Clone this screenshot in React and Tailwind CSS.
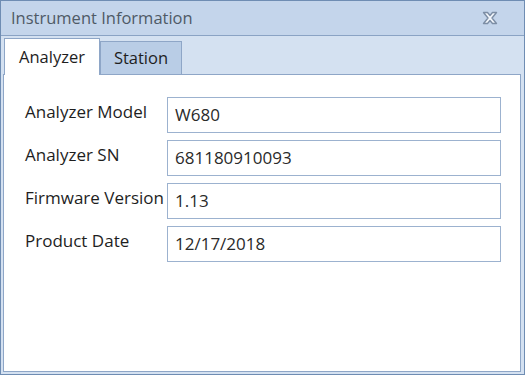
import React from 'react';

const rows = [
  { label: 'Analyzer Model', value: 'W680' },
  { label: 'Analyzer SN', value: '681180910093' },
  { label: 'Firmware Version', value: '1.13' },
  { label: 'Product Date', value: '12/17/2018' },
];

function CloseIcon() {
  return (
    <svg width="16" height="14" viewBox="0 0 16 14">
      <path
        d="M1.5 1.5h4l2.5 3 2.5-3h4l-4.5 5.5 4.5 5.5h-4l-2.5-3-2.5 3h-4l4.5-5.5z"
        fill="#f2f6fb"
        stroke="#7d8ea5"
        strokeWidth="1.4"
        strokeLinejoin="round"
      />
    </svg>
  );
}

export default function App() {
  return (
    <div
      className="w-[525px] h-[375px] flex flex-col bg-[#c4d5eb] border border-[#6f8db3] text-[#1e1e1e]"
      style={{ fontFamily: '"Open Sans", "Noto Sans", sans-serif' }}
    >
      {/* Title bar */}
      <div className="h-[35px] shrink-0 flex items-center justify-between pl-[10px] pr-[26px] border-b border-[#8aa3c4]">
        <span className="text-[16.5px] text-[#4f5a66] pt-[1px]">Instrument Information</span>
        <CloseIcon />
      </div>

      {/* Body */}
      <div className="flex-1 flex flex-col bg-[#d4e1f1] pl-[2px] pr-[3px] pb-[2px]">
        {/* Tabs */}
        <div className="h-[38px] shrink-0 flex items-end pl-[1px]">
          <div className="relative z-10 -mb-px h-[37px] w-[96px] flex items-center justify-center bg-white border border-b-0 border-[#8ea6c7] text-[16.5px]">
            Analyzer
          </div>
          <div className="h-[33px] w-[82px] flex items-center justify-center bg-[#b9cde6] border border-b-0 border-[#8ea6c7] text-[16.5px]">
            Station
          </div>
        </div>

        {/* Content */}
        <div className="flex-1 bg-white border border-[#8ea6c7] pt-[22px] pl-[21px] pr-[19px] flex flex-col gap-[7px]">
          {rows.map((r) => (
            <div key={r.label} className="flex h-[36px]">
              <div className="w-[142px] shrink-0 pt-[4px] text-[17px] leading-[22px] whitespace-nowrap">{r.label}</div>
              <div className="flex-1 flex items-center border border-[#9cb2cf] pl-[7px] text-[17px] text-[#2a2a2a]">
                {r.value}
              </div>
            </div>
          ))}
        </div>
      </div>
    </div>
  );
}
